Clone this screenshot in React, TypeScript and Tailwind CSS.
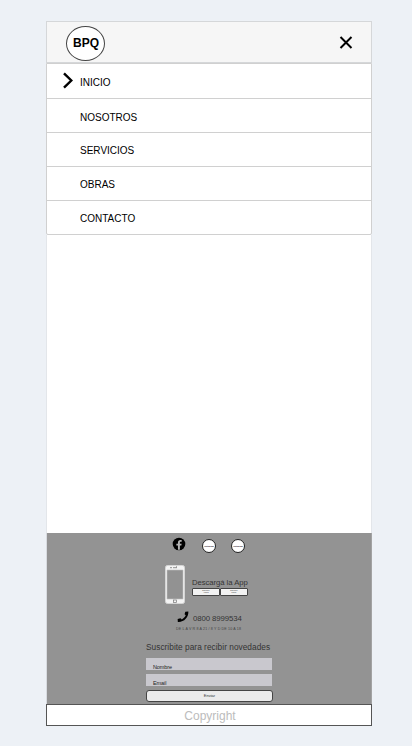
import React from "react";

const links = [
  { label: "INICIO", row: "h-[35px] pt-[10px] border-b" },
  { label: "NOSOTROS", row: "h-[34px] pt-[10px] border-b" },
  { label: "SERVICIOS", row: "h-[34px] pt-[9px] border-b" },
  { label: "OBRAS", row: "h-[34px] pt-[9px] border-b" },
  { label: "CONTACTO", row: "h-[33px] pt-[9px]" },
];

function Header() {
  return (
    <header className="flex h-[42px] shrink-0 items-start justify-between border border-[#d5d7d9] bg-[#f6f6f6] pl-[19px] pr-[18px]">
      <div className="mt-1 flex h-[35px] w-[39px] items-center justify-center rounded-[50%] border border-[#444] bg-white pb-[2px] pl-px text-[12px] font-bold leading-none">
        BPQ
      </div>
      <svg className="mt-[14px] h-[13px] w-[14px]" viewBox="0 0 14 13" fill="none" stroke="black" strokeWidth="2">
        <path d="M1.5 1 12.5 12M12.5 1 1.5 12" />
      </svg>
    </header>
  );
}

function Menu() {
  return (
    <nav className="shrink-0 rounded-b-[2px] border border-[#d0d0d0] bg-white">
      {links.map((link, i) => (
        <a key={link.label} className={`flex items-start border-[#d0d0d0] text-[10px] leading-[17px] ${link.row}`}>
          <span className="flex w-[33px] shrink-0 justify-end pr-[7px]">
            {i === 0 && (
              <svg className="-mt-[2px] h-[17px] w-[10px]" viewBox="0 0 10 17" fill="none" stroke="black" strokeWidth="2.4">
                <path d="M1 1.3 8.3 8.5 1 15.7" />
              </svg>
            )}
          </span>
          {link.label}
        </a>
      ))}
    </nav>
  );
}

function SocialCircle() {
  return (
    <span className="flex size-[14px] items-center justify-center rounded-full border border-[#222] bg-white text-[2px] font-bold leading-none">
      Instagram
    </span>
  );
}

function StoreButton({ name }: { name: string }) {
  return (
    <span className="flex h-[8px] w-[28px] flex-col items-center justify-center rounded-[1px] border border-[#444] bg-[#f2f2f2] text-[1.6px] leading-[2px] text-[#333]">
      <span>Disponible</span>
      <span>{name}</span>
    </span>
  );
}

function Footer() {
  return (
    <footer className="flex h-[171px] shrink-0 flex-col border-x border-l-[#d8dbe0] border-r-[#a3a3a3] bg-[#939393] text-[#333]">
      <div className="flex h-[32px] items-start pl-[125px] pt-[6px]">
        <svg className="-mt-[2px] size-[14px]" viewBox="0 0 24 24">
          <circle cx="12" cy="12" r="10.8" fill="black" />
          <path
            d="M10.2 22V14.7H7.5V11.6h2.7V9.3c0-2.7 1.6-4.2 4-4.2 1.2 0 2.4.2 2.4.2V8h-1.4c-1.3 0-1.7.8-1.7 1.7v1.9h3l-.5 3.1h-2.5V22z"
            fill="#b5b5b5"
          />
        </svg>
        <span className="ml-[16px]"><SocialCircle /></span>
        <span className="ml-[15px]"><SocialCircle /></span>
      </div>
      <div className="flex h-[45px] items-start pl-[118px]">
        <svg className="h-[39px] w-[20px] shrink-0" viewBox="0 0 20 39">
          <rect x=".5" y=".5" width="19" height="38" rx="2" fill="#f4f4f4" stroke="#d5d5d5" />
          <path d="M2 5h16v29H2z" fill="#929292" stroke="#c2c2c2" strokeWidth=".6" />
          <path d="M5 2.7h2M8 2.7h4M11 1.8h1" stroke="#777" strokeWidth=".8" />
          <rect x="8.6" y="35" width="2.8" height="2.6" fill="none" stroke="#777" strokeWidth=".7" />
        </svg>
        <div className="ml-[7px] pt-[12px]">
          <div className="h-[11px] whitespace-nowrap text-[7.7px] leading-[11px] tracking-[-0.05px]">Descargá la App</div>
          <div className="flex">
            <StoreButton name="Android" />
            <StoreButton name="iPhone" />
          </div>
        </div>
      </div>
      <div className="flex h-[15px] items-start pl-[130px]">
        <svg className="mt-px h-[12px] w-[12px]" viewBox="0 0 13 13">
          <path d="M9 .7 12.3.5C12.7 6.9 7.4 12.3.9 11.8L.7 8.7 3.8 7.8 5.2 9.1C7.2 8.1 8.7 6.5 9.5 4.7L8.2 3.5z" fill="black" />
        </svg>
        <span className="ml-[4px] whitespace-nowrap text-[7.8px] leading-[18px] tracking-[-0.1px]">0800 8999534</span>
      </div>
      <p className="flex h-[16px] whitespace-nowrap pl-[129px] pt-[1px] text-[3.6px] leading-[6px] tracking-[0.15px] text-[#444]">
        DE L A V R 8 A 21 / 8 Y D DE 10 A 18
      </p>
      <p className="h-[16px] whitespace-nowrap pl-[99px] text-[8.3px] leading-[12px] tracking-[0.03px]">
        Suscribite para recibir novedades
      </p>
      <div className="flex flex-col gap-[4px] pl-[99px] pt-px">
        <label className="h-[12px] w-[126px] bg-[#c9c8ce] pl-[7px] pt-[6px] text-[5.5px] leading-[7px] tracking-[-0.1px] text-[#222]">
          Nombre
        </label>
        <label className="h-[12px] w-[126px] bg-[#c9c8ce] pl-[7px] pt-[6px] text-[5.5px] leading-[7px] tracking-[-0.1px] text-[#222]">
          Email
        </label>
        <button className="flex h-[12px] w-[127px] items-center justify-center rounded-[3px] border border-[#444] bg-[#ebebeb] text-[4px] leading-none">
          Enviar
        </button>
      </div>
    </footer>
  );
}

export default function App() {
  return (
    <div className="h-[746px] w-[412px] bg-[#edf1f6] pl-[46px] pt-[21px] font-['Liberation_Sans',Arial,sans-serif] text-black">
      <main className="flex h-[705px] w-[326px] flex-col">
        <Header />
        <Menu />
        <div className="grow border-x border-[#e3e6ea] bg-white" />
        <Footer />
        <div className="flex h-[22px] shrink-0 items-center justify-center border border-[#555] bg-white pl-[2px] pt-px text-[12px] text-[#bcbcbc]">
          Copyright
        </div>
      </main>
    </div>
  );
}
